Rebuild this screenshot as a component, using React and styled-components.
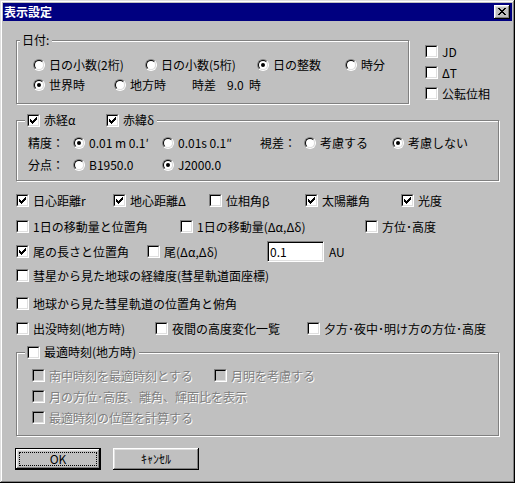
import styled, { createGlobalStyle } from "styled-components";

const GlobalStyle = createGlobalStyle`
  html, body {
    margin: 0;
    padding: 0;
    background: #c0c0c0;
  }
  body {
    font-family: "Noto Sans CJK JP", "Liberation Sans", sans-serif;
    font-size: 12px;
    color: #000;
  }
`;

const Window = styled.div`
  width: 515px;
  height: 483px;
  box-sizing: border-box;
  padding: 3px;
  background: #c0c0c0;
  box-shadow: inset -1px -1px #000, inset 1px 1px #dfdfdf,
    inset -2px -2px #808080, inset 2px 2px #fff;
  display: flex;
  flex-direction: column;
`;

const TitleBar = styled.div`
  height: 18px;
  background: #000080;
  display: flex;
  align-items: center;
  padding-left: 1px;
`;

const Title = styled.span`
  flex: 1;
  color: #fff;
  font-weight: bold;
  line-height: 14px;
`;

const CloseButton = styled.div`
  width: 16px;
  height: 14px;
  margin-right: 2px;
  box-sizing: border-box;
  background: #c0c0c0;
  box-shadow: inset -1px -1px #000, inset 1px 1px #fff,
    inset -2px -2px #808080, inset 2px 2px #dfdfdf;
  display: flex;
  align-items: center;
  justify-content: center;
  padding: 0 1px 1px 0;
`;

const Body = styled.div`
  padding: 19px 0 0 13px;
  display: flex;
  flex-direction: column;
`;

const TopSection = styled.div`
  display: flex;
  align-items: flex-start;
`;

const Group = styled.div`
  width: ${(p) => p.w}px;
  box-sizing: border-box;
  margin-top: ${(p) => p.mt || 0}px;
  padding-bottom: ${(p) => p.pb}px;
  border: 1px solid #808080;
  box-shadow: inset 1px 1px #fff, 1px 1px #fff;
  display: flex;
  flex-direction: column;
`;

const Legend = styled.div`
  align-self: flex-start;
  height: ${(p) => p.h}px;
  margin: -${(p) => p.up}px 0 0 ${(p) => p.ml}px;
  padding: 0 3px 0 2px;
  background: #c0c0c0;
  display: flex;
  align-items: center;
`;

const GroupContent = styled.div`
  padding: ${(p) => p.pt}px 0 0 ${(p) => p.indent}px;
  display: flex;
  flex-direction: column;
`;

const Row = styled.div`
  height: ${(p) => p.h || 21}px;
  margin-top: ${(p) => p.mt || 0}px;
  display: flex;
  align-items: center;
`;

const Item = styled.div`
  flex: ${(p) => (p.w ? `0 0 ${p.w}px` : "0 0 auto")};
  display: flex;
  align-items: center;
`;

const Label = styled.span`
  white-space: nowrap;
  line-height: 14px;
  color: ${(p) => (p.disabled ? "#808080" : "#000")};
  text-shadow: ${(p) => (p.disabled ? "1px 1px 0 #fff" : "none")};
`;

const Num = styled.span`
  display: inline-block;
  width: ${(p) => p.w}px;
  margin-left: ${(p) => p.ml || 0}px;
`;

const RadioOuter = styled.span`
  flex: 0 0 auto;
  width: 12px;
  height: 12px;
  box-sizing: border-box;
  margin-right: 4px;
  border-radius: 50%;
  border: 1px solid;
  border-color: #808080 #fff #fff #808080;
`;

const RadioInner = styled.span`
  width: 100%;
  height: 100%;
  box-sizing: border-box;
  border-radius: 50%;
  border: 1px solid;
  border-color: #000 #dfdfdf #dfdfdf #000;
  background: #fff;
  display: flex;
  align-items: center;
  justify-content: center;
`;

const Dot = styled.span`
  width: 4px;
  height: 4px;
  border-radius: 50%;
  background: #000;
`;

const CheckOuter = styled.span`
  flex: 0 0 auto;
  width: 13px;
  height: 13px;
  box-sizing: border-box;
  margin-right: 4px;
  border: 1px solid;
  border-color: #808080 #fff #fff #808080;
`;

const CheckInner = styled.span`
  width: 100%;
  height: 100%;
  box-sizing: border-box;
  border: 1px solid;
  border-color: #000 #dfdfdf #dfdfdf #000;
  background: ${(p) => (p.disabled ? "#c0c0c0" : "#fff")};
  display: flex;
  align-items: center;
  justify-content: center;
`;

const SideColumn = styled.div`
  margin-left: 16px;
  padding-top: 1px;
  display: flex;
  flex-direction: column;
`;

const TextBox = styled.input`
  width: 57px;
  height: 21px;
  box-sizing: border-box;
  margin: 0;
  padding: 0 2px;
  border: 1px solid;
  border-color: #808080 #fff #fff #808080;
  box-shadow: inset 1px 1px #000, inset -1px -1px #dfdfdf;
  background: #fff;
  font: inherit;
  line-height: 14px;
  color: #000;
  outline: none;
`;

const Unit = styled.span`
  margin-left: 5px;
  line-height: 14px;
`;

const ButtonBar = styled.div`
  margin: 12px 0 0 -1px;
  display: flex;
  gap: 12px;
`;

const Button = styled.div`
  width: 86px;
  height: 22px;
  box-sizing: border-box;
  border: ${(p) => (p.primary ? "1px solid #000" : "none")};
  padding: ${(p) => (p.primary ? "3px" : "0")};
  box-shadow: inset -1px -1px #000, inset 1px 1px #fff,
    inset -2px -2px #808080, inset 2px 2px #dfdfdf;
  display: flex;
  align-items: stretch;
  justify-content: center;
`;

const ButtonText = styled.span`
  flex: 1;
  display: flex;
  align-items: center;
  justify-content: center;
  line-height: 14px;
  border: ${(p) => (p.focused ? "1px dotted #000" : "1px solid transparent")};
`;

const Radio = ({ checked }) => (
  <RadioOuter>
    <RadioInner>{checked && <Dot />}</RadioInner>
  </RadioOuter>
);

const Check = ({ checked, disabled }) => (
  <CheckOuter>
    <CheckInner disabled={disabled}>
      {checked && (
        <svg width="7" height="7" viewBox="0 0 7 7" shapeRendering="crispEdges">
          <path
            d="M0 2h1v3H0z M1 3h1v3H1z M2 4h1v3H2z M3 3h1v3H3z M4 2h1v3H4z M5 1h1v3H5z M6 0h1v3H6z"
            fill="#000"
          />
        </svg>
      )}
    </CheckInner>
  </CheckOuter>
);

const RadioItem = ({ w, checked, children }) => (
  <Item w={w}>
    <Radio checked={checked} />
    <Label>{children}</Label>
  </Item>
);

const CheckItem = ({ w, checked, disabled, children }) => (
  <Item w={w}>
    <Check checked={checked} disabled={disabled} />
    <Label disabled={disabled}>{children}</Label>
  </Item>
);

export default function App() {
  return (
    <>
      <GlobalStyle />
      <Window>
        <TitleBar>
          <Title>表示設定</Title>
          <CloseButton>
            <svg width="8" height="7" viewBox="0 0 8 7" shapeRendering="crispEdges">
              <path
                d="M0 0h2v1H0z M6 0h2v1H6z M1 1h2v1H1z M5 1h2v1H5z M2 2h4v1H2z M3 3h2v1H3z M2 4h4v1H2z M1 5h2v1H1z M5 5h2v1H5z M0 6h2v1H0z M6 6h2v1H6z"
                fill="#000"
              />
            </svg>
          </CloseButton>
        </TitleBar>

        <Body>
          <TopSection>
            <Group w={393} pb={8}>
              <Legend h={14} up={8} ml={3}>
                <Label>日付:</Label>
              </Legend>
              <GroupContent pt={8} indent={16}>
                <Row h={20}>
                  <RadioItem w={112}>日の小数(2桁)</RadioItem>
                  <RadioItem w={112}>日の小数(5桁)</RadioItem>
                  <RadioItem w={88} checked>日の整数</RadioItem>
                  <RadioItem>時分</RadioItem>
                </Row>
                <Row h={20}>
                  <RadioItem w={81} checked>世界時</RadioItem>
                  <RadioItem w={78}>地方時</RadioItem>
                  <Item>
                    <Label>
                      時差<Num w={22} ml={11}>9.0</Num>時
                    </Label>
                  </Item>
                </Row>
              </GroupContent>
            </Group>

            <SideColumn>
              <Row>
                <CheckItem>JD</CheckItem>
              </Row>
              <Row>
                <CheckItem>ΔT</CheckItem>
              </Row>
              <Row>
                <CheckItem>公転位相</CheckItem>
              </Row>
            </SideColumn>
          </TopSection>

          <Group w={483} mt={16} pb={5}>
            <Legend h={16} up={9} ml={8}>
              <CheckItem w={79} checked>赤経α</CheckItem>
              <CheckItem checked>赤緯δ</CheckItem>
            </Legend>
            <GroupContent pt={5} indent={11}>
              <Row h={20}>
                <Item w={45}>
                  <Label>精度：</Label>
                </Item>
                <RadioItem w={89} checked>0.01 m 0.1′</RadioItem>
                <RadioItem w={98}>0.01s 0.1″</RadioItem>
                <Item w={44}>
                  <Label>視差：</Label>
                </Item>
                <RadioItem w={88}>考慮する</RadioItem>
                <RadioItem checked>考慮しない</RadioItem>
              </Row>
              <Row h={20} mt={2}>
                <Item w={45}>
                  <Label>分点：</Label>
                </Item>
                <RadioItem w={89}>B1950.0</RadioItem>
                <RadioItem checked>J2000.0</RadioItem>
              </Row>
            </GroupContent>
          </Group>

          <Row mt={9}>
            <CheckItem w={97} checked>日心距離r</CheckItem>
            <CheckItem w={96} checked>地心距離Δ</CheckItem>
            <CheckItem w={96}>位相角β</CheckItem>
            <CheckItem w={96} checked>太陽離角</CheckItem>
            <CheckItem checked>光度</CheckItem>
          </Row>
          <Row mt={5}>
            <CheckItem w={164}>1日の移動量と位置角</CheckItem>
            <CheckItem w={185}>1日の移動量(Δα,Δδ)</CheckItem>
            <CheckItem>方位･高度</CheckItem>
          </Row>
          <Row mt={4}>
            <CheckItem w={131} checked>尾の長さと位置角</CheckItem>
            <CheckItem w={120}>尾(Δα,Δδ)</CheckItem>
            <TextBox defaultValue="0.1" readOnly />
            <Unit>AU</Unit>
          </Row>
          <Row mt={3}>
            <CheckItem>彗星から見た地球の経緯度(彗星軌道面座標)</CheckItem>
          </Row>
          <Row mt={7}>
            <CheckItem>地球から見た彗星軌道の位置角と俯角</CheckItem>
          </Row>
          <Row mt={4}>
            <CheckItem w={139}>出没時刻(地方時)</CheckItem>
            <CheckItem w={152}>夜間の高度変化一覧</CheckItem>
            <CheckItem>夕方･夜中･明け方の方位･高度</CheckItem>
          </Row>

          <Group w={483} mt={13} pb={7}>
            <Legend h={16} up={9} ml={8}>
              <CheckItem>最適時刻(地方時)</CheckItem>
            </Legend>
            <GroupContent pt={5} indent={15}>
              <Row>
                <CheckItem w={182} disabled>南中時刻を最適時刻とする</CheckItem>
                <CheckItem disabled>月明を考慮する</CheckItem>
              </Row>
              <Row>
                <CheckItem disabled>月の方位･高度、離角、輝面比を表示</CheckItem>
              </Row>
              <Row>
                <CheckItem disabled>最適時刻の位置を計算する</CheckItem>
              </Row>
            </GroupContent>
          </Group>

          <ButtonBar>
            <Button primary>
              <ButtonText focused>OK</ButtonText>
            </Button>
            <Button>
              <ButtonText>ｷｬﾝｾﾙ</ButtonText>
            </Button>
          </ButtonBar>
        </Body>
      </Window>
    </>
  );
}
